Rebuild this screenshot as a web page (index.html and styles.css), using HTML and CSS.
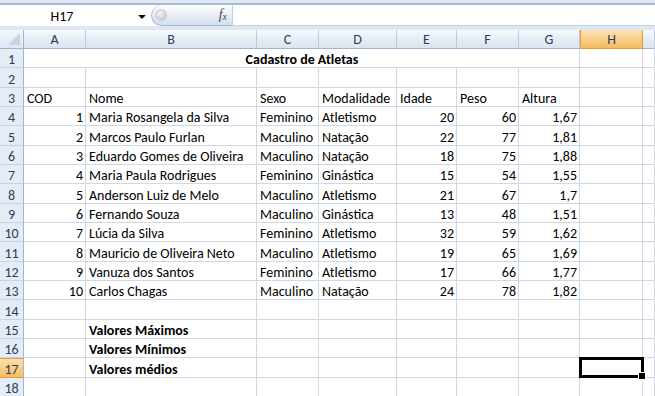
FILE: index.html
```html
<!DOCTYPE html>
<html lang="pt">
<head>
<meta charset="utf-8">
<title>Cadastro de Atletas</title>
<link rel="stylesheet" href="styles.css">
</head>
<body>
<div class="app">
  <div class="fbar">
    <div class="namebox">
      <span class="ref">H17</span>
      <span class="drop"></span>
    </div>
    <div class="pill">
      <span class="knob"></span>
      <span class="fx">f<sub>x</sub></span>
    </div>
    <div class="formula"></div>
  </div>
  <div class="sheet">
    <div class="corner"><span class="tri"></span></div>
    <div class="ch">A</div><div class="ch">B</div><div class="ch">C</div><div class="ch">D</div><div class="ch">E</div><div class="ch">F</div><div class="ch">G</div><div class="ch sel">H</div><div class="ch"></div>

    <div class="rh">1</div><div class="c title">Cadastro de Atletas</div><div class="c"></div><div class="c"></div>

    <div class="rh">2</div><div class="c"></div><div class="c"></div><div class="c"></div><div class="c"></div><div class="c"></div><div class="c"></div><div class="c"></div><div class="c"></div><div class="c"></div>

    <div class="rh">3</div><div class="c">COD</div><div class="c">Nome</div><div class="c">Sexo</div><div class="c">Modalidade</div><div class="c">Idade</div><div class="c">Peso</div><div class="c">Altura</div><div class="c"></div><div class="c"></div>

    <div class="rh">4</div><div class="c n">1</div><div class="c">Maria Rosangela da Silva</div><div class="c">Feminino</div><div class="c">Atletismo</div><div class="c n">20</div><div class="c n">60</div><div class="c n">1,67</div><div class="c"></div><div class="c"></div>

    <div class="rh">5</div><div class="c n">2</div><div class="c">Marcos Paulo Furlan</div><div class="c">Maculino</div><div class="c">Natação</div><div class="c n">22</div><div class="c n">77</div><div class="c n">1,81</div><div class="c"></div><div class="c"></div>

    <div class="rh">6</div><div class="c n">3</div><div class="c">Eduardo Gomes de Oliveira</div><div class="c">Maculino</div><div class="c">Natação</div><div class="c n">18</div><div class="c n">75</div><div class="c n">1,88</div><div class="c"></div><div class="c"></div>

    <div class="rh">7</div><div class="c n">4</div><div class="c">Maria Paula Rodrigues</div><div class="c">Feminino</div><div class="c">Ginástica</div><div class="c n">15</div><div class="c n">54</div><div class="c n">1,55</div><div class="c"></div><div class="c"></div>

    <div class="rh">8</div><div class="c n">5</div><div class="c">Anderson Luiz de Melo</div><div class="c">Maculino</div><div class="c">Atletismo</div><div class="c n">21</div><div class="c n">67</div><div class="c n">1,7</div><div class="c"></div><div class="c"></div>

    <div class="rh">9</div><div class="c n">6</div><div class="c">Fernando Souza</div><div class="c">Maculino</div><div class="c">Ginástica</div><div class="c n">13</div><div class="c n">48</div><div class="c n">1,51</div><div class="c"></div><div class="c"></div>

    <div class="rh">10</div><div class="c n">7</div><div class="c">Lúcia da Silva</div><div class="c">Feminino</div><div class="c">Atletismo</div><div class="c n">32</div><div class="c n">59</div><div class="c n">1,62</div><div class="c"></div><div class="c"></div>

    <div class="rh">11</div><div class="c n">8</div><div class="c">Mauricio de Oliveira Neto</div><div class="c">Maculino</div><div class="c">Atletismo</div><div class="c n">19</div><div class="c n">65</div><div class="c n">1,69</div><div class="c"></div><div class="c"></div>

    <div class="rh">12</div><div class="c n">9</div><div class="c">Vanuza dos Santos</div><div class="c">Feminino</div><div class="c">Atletismo</div><div class="c n">17</div><div class="c n">66</div><div class="c n">1,77</div><div class="c"></div><div class="c"></div>

    <div class="rh">13</div><div class="c n">10</div><div class="c">Carlos Chagas</div><div class="c">Maculino</div><div class="c">Natação</div><div class="c n">24</div><div class="c n">78</div><div class="c n">1,82</div><div class="c"></div><div class="c"></div>

    <div class="rh">14</div><div class="c"></div><div class="c"></div><div class="c"></div><div class="c"></div><div class="c"></div><div class="c"></div><div class="c"></div><div class="c"></div><div class="c"></div>

    <div class="rh">15</div><div class="c"></div><div class="c b">Valores Máximos</div><div class="c"></div><div class="c"></div><div class="c"></div><div class="c"></div><div class="c"></div><div class="c"></div><div class="c"></div>

    <div class="rh">16</div><div class="c"></div><div class="c b">Valores Mínimos</div><div class="c"></div><div class="c"></div><div class="c"></div><div class="c"></div><div class="c"></div><div class="c"></div><div class="c"></div>

    <div class="rh sel">17</div><div class="c"></div><div class="c b">Valores médios</div><div class="c"></div><div class="c"></div><div class="c"></div><div class="c"></div><div class="c"></div><div class="c active"></div><div class="c"></div>

    <div class="rh">18</div><div class="c"></div><div class="c"></div><div class="c"></div><div class="c"></div><div class="c"></div><div class="c"></div><div class="c"></div><div class="c"></div><div class="c"></div>
  </div>
</div>
</body>
</html>
```

FILE: styles.css
```css
* { box-sizing: border-box; }
html, body { margin: 0; padding: 0; }
body {
  background: #fff;
  font-family: "Carlito", "Lato", "Open Sans", sans-serif;
  font-size: 14px;
  color: #000;
}
.app {
  width: 655px;
  height: 396px;
  overflow: hidden;
  background: #dfe7f2;
}

/* formula bar */
.fbar {
  display: flex;
  height: 23px;
  margin-top: 3px;
  border-top: 2px solid #a7bbd6;
  background: #fff;
}
.namebox {
  width: 151px;
  display: flex;
  align-items: center;
}
.ref {
  flex: 1;
  text-align: center;
  font-size: 14px;
  margin-right: 14px;
  padding-top: 1px;
}
.drop {
  width: 0; height: 0;
  border-left: 4px solid transparent;
  border-right: 4px solid transparent;
  border-top: 4px solid #111;
  margin-right: 5px;
  margin-top: 2px;
}
.pill {
  width: 82px;
  height: 21px;
  border: 1px solid #a6bad4;
  border-top: 0;
  border-right: 1px solid #c0cde0;
  border-radius: 11px 0 0 11px;
  background: linear-gradient(#ffffff, #e6ecf5 55%, #d4dfee);
  display: flex;
  align-items: center;
  justify-content: space-between;
  padding: 0 5px 0 3px;
}
.knob {
  width: 12px; height: 12px;
  border-radius: 50%;
  background: radial-gradient(circle at 40% 35%, #f4f4f4, #b9bcc2);
  border: 1px solid #c9ccd2;
}
.fx {
  font-family: "Liberation Serif", serif;
  font-style: italic;
  font-size: 14px;
  color: #4a4a4a;
}
.fx sub { font-size: 10px; vertical-align: -1px; }
.formula {
  flex: 1;
  height: 21px;
  border-bottom: 1px solid #c3d0e2;
  background: #fff;
}

/* sheet */
.sheet {
  margin-top: 4px;
  display: grid;
  grid-template-columns: 24px 62px 171px 62px 78px 60px 62px 61px 63px 12px;
  grid-template-rows: 19px;
  grid-auto-rows: 19.33px;
  background: #fff;
}
.corner {
  background: linear-gradient(#f3f6fb, #dde6f2);
  border-right: 1px solid #9eb6ce;
  border-bottom: 1px solid #9eb6ce;
  position: relative;
}
.tri {
  position: absolute;
  right: 3px; bottom: 3px;
  width: 0; height: 0;
  border-left: 12px solid transparent;
  border-bottom: 12px solid #c7d4e5;
}
.ch {
  background: linear-gradient(#f7f9fc, #e6edf6 50%, #dbe4f0);
  border-right: 1px solid #bccbde;
  border-bottom: 1px solid #9eb6ce;
  color: #2c3e58;
  font-size: 14px;
  display: flex;
  align-items: center;
  justify-content: center;
  line-height: 1;
  padding-top: 2px;
}
.ch.sel {
  background: linear-gradient(#fbe3b8, #f7cd85 55%, #f2bb5e);
  border-right: 1px solid #f29536;
  border-left: 1px solid #f29536;
  border-bottom: 1px solid #f29536;
}
.rh {
  background: #e4ecf7;
  border-right: 1px solid #9eb6ce;
  border-bottom: 1px solid #c5d3e4;
  color: #2c3e58;
  font-size: 14px;
  display: flex;
  align-items: flex-end;
  justify-content: center;
  line-height: 15px;
}
.rh.sel {
  background: linear-gradient(#fbe0b0, #f7cc80 55%, #f3bf66);
  border-top: 1px solid #f29536;
  border-bottom: 1px solid #f29536;
}
.c {
  border-right: 1px solid #d0d7e5;
  border-bottom: 1px solid #d0d7e5;
  white-space: nowrap;
  overflow: hidden;
  display: flex;
  align-items: flex-end;
  padding: 0 2px 0 3px;
  line-height: 15px;
}
.c.n { justify-content: flex-end; }
.c.b { font-weight: bold; }
.c.title {
  grid-column: span 7;
  justify-content: center;
  font-weight: bold;
}
.c.active { position: relative; overflow: visible; }
.c.active::after {
  content: "";
  position: absolute;
  left: -1px; top: -1px; right: -2px; bottom: -1px;
  border: 3px solid #000;
}
.c.active::before {
  content: "";
  position: absolute;
  right: -4px; bottom: -3px;
  width: 6px; height: 6px;
  background: #000;
  border: 1px solid #fff;
  z-index: 2;
}
```
